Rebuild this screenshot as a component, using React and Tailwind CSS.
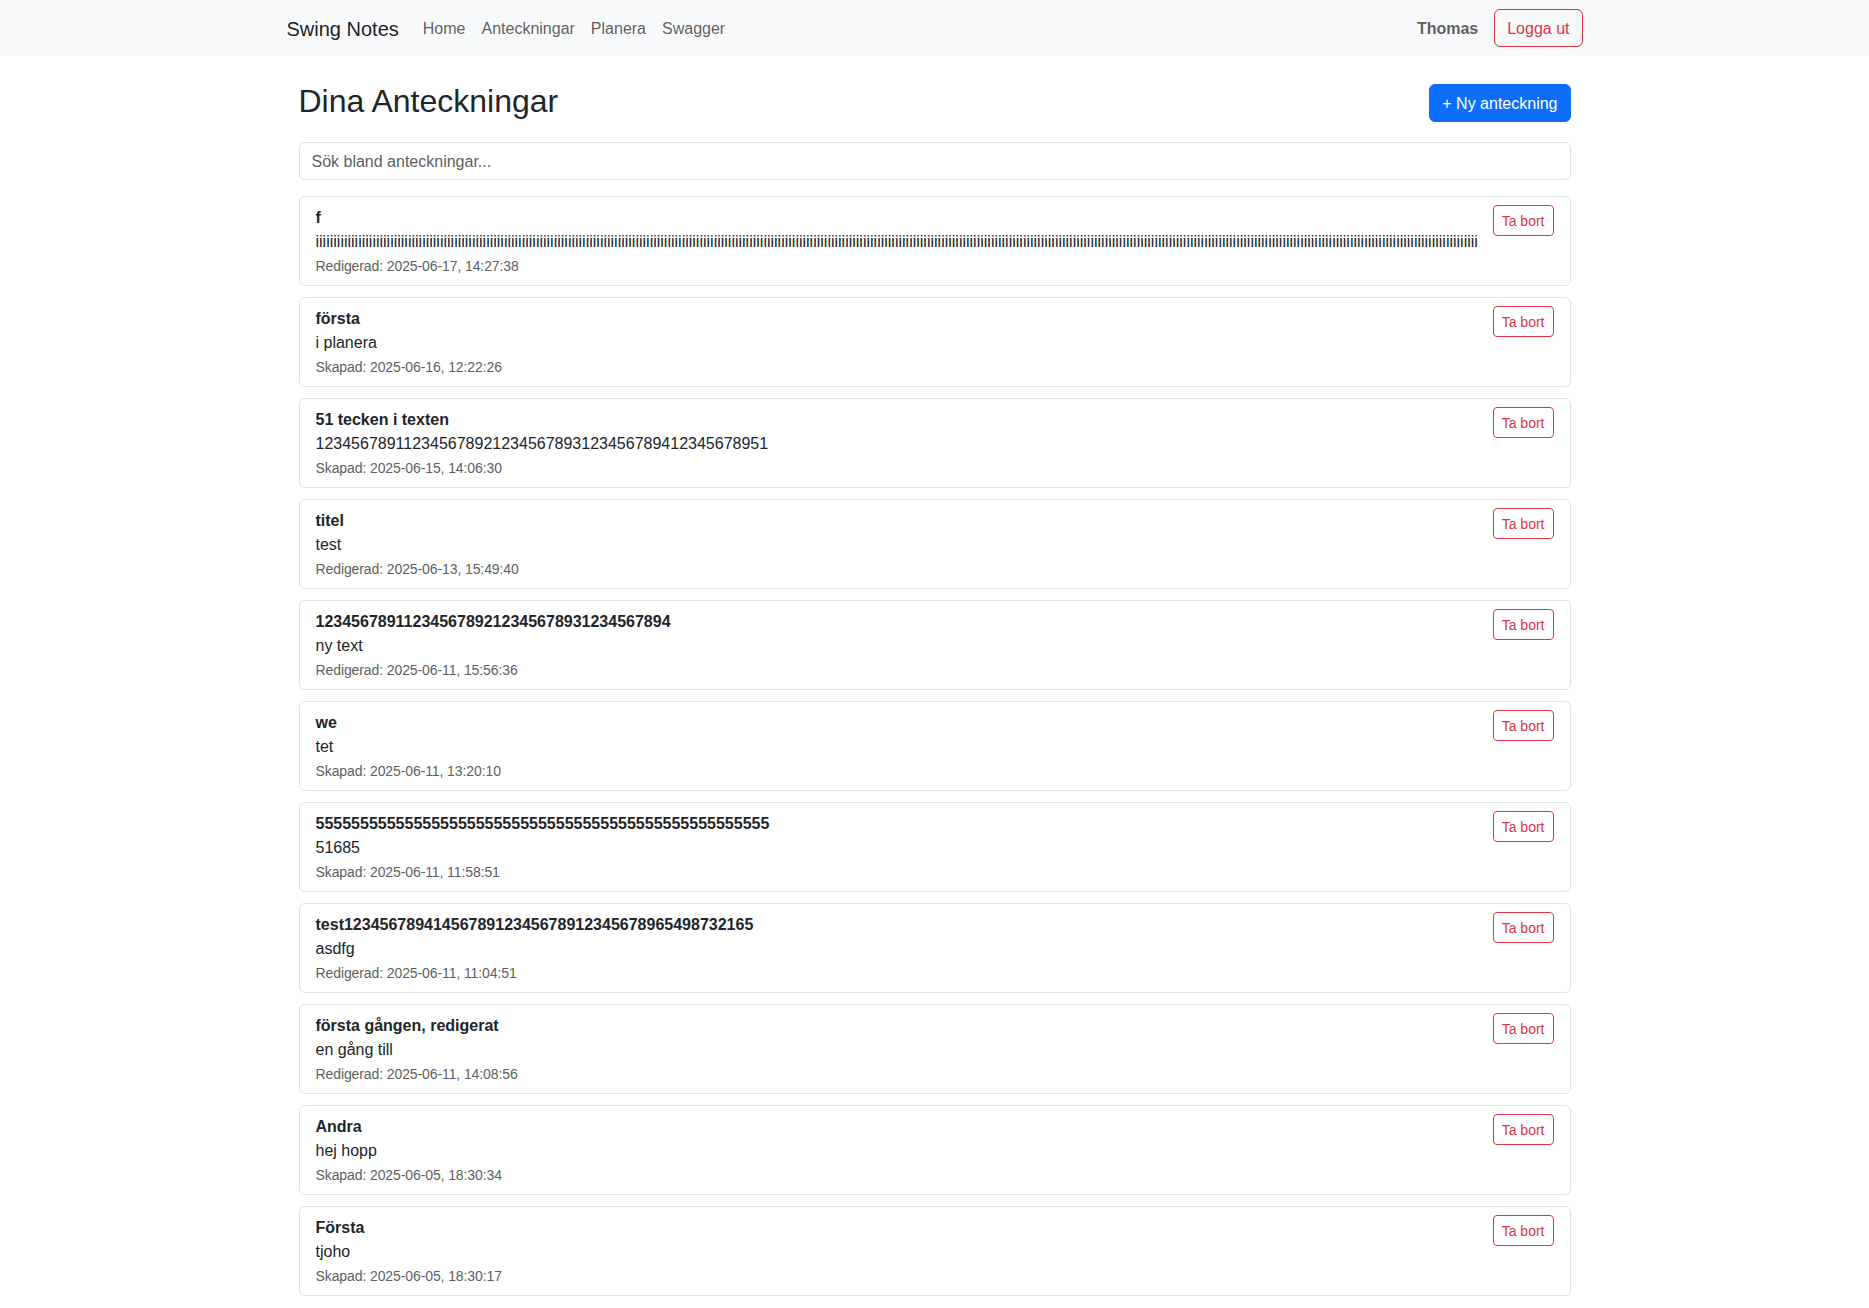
import React, { useState } from 'react';

const notes = [
  { title: 'f', body: 'i'.repeat(327), meta: 'Redigerad: 2025-06-17, 14:27:38' },
  { title: 'första', body: 'i planera', meta: 'Skapad: 2025-06-16, 12:22:26' },
  { title: '51 tecken i texten', body: '123456789112345678921234567893123456789412345678951', meta: 'Skapad: 2025-06-15, 14:06:30' },
  { title: 'titel', body: 'test', meta: 'Redigerad: 2025-06-13, 15:49:40' },
  { title: '1234567891123456789212345678931234567894', body: 'ny text', meta: 'Redigerad: 2025-06-11, 15:56:36' },
  { title: 'we', body: 'tet', meta: 'Skapad: 2025-06-11, 13:20:10' },
  { title: '5'.repeat(51), body: '51685', meta: 'Skapad: 2025-06-11, 11:58:51' },
  { title: 'test1234567894145678912345678912345678965498732165', body: 'asdfg', meta: 'Redigerad: 2025-06-11, 11:04:51' },
  { title: 'första gången, redigerat', body: 'en gång till', meta: 'Redigerad: 2025-06-11, 14:08:56' },
  { title: 'Andra', body: 'hej hopp', meta: 'Skapad: 2025-06-05, 18:30:34' },
  { title: 'Första', body: 'tjoho', meta: 'Skapad: 2025-06-05, 18:30:17' },
];

const NoteCard = ({ note }) => (
  <div className="mb-[11px] flex items-start justify-between rounded-md border border-[#dee2e6] bg-white px-4 pt-[9px] pb-[7px]">
    <div className="min-w-0">
      <div className="font-bold leading-6">{note.title}</div>
      <div className="leading-6 whitespace-nowrap">{note.body}</div>
      <div className="leading-6">
        <small className="text-[14px] tracking-[-0.1px] text-[#5c5f62]">{note.meta}</small>
      </div>
    </div>
    <button className="-mt-px ml-2 shrink-0 rounded-[4px] border border-[#dc3545] bg-white px-2 pt-[5px] pb-[3px] text-[14px] leading-[21px] text-[#dc3545]">
      Ta bort
    </button>
  </div>
);

const App = () => {
  const [search, setSearch] = useState('');

  return (
    <div className="min-h-screen bg-white font-['Liberation_Sans',Arial,sans-serif] text-[16px] text-[#212529]">
      {/* Navbar */}
      <nav className="h-14 bg-[#f8f9fa]">
        <div className="mx-auto flex h-full max-w-[1320px] items-center px-3">
          <span className="mr-4 pt-[6px] pb-[4px] text-[20px] leading-[30px] text-[#000000e6]">Swing Notes</span>
          <div className="flex">
            {['Home', 'Anteckningar', 'Planera', 'Swagger'].map(link => (
              <a key={link} className="px-2 pt-[9px] pb-[7px] leading-6 text-[#000000a6]">{link}</a>
            ))}
          </div>
          <div className="ml-auto flex items-center">
            <span className="mr-4 pt-px font-bold text-[#000000a6]">Thomas</span>
            <button className="rounded-md border border-[#dc3545] px-3 pt-[7px] pb-[5px] leading-6 text-[#dc3545]">
              Logga ut
            </button>
          </div>
        </div>
      </nav>

      <div className="mx-auto mt-6 max-w-[1320px] px-6">
        {/* Header */}
        <div className="mb-4 flex items-center justify-between">
          <h2 className="mb-[6px] pt-[2px] text-[32px] leading-[38.4px] font-normal">Dina Anteckningar</h2>
          <button className="rounded-md border border-[#0d6efd] bg-[#0d6efd] px-3 pt-[7px] pb-[5px] leading-6 text-white">
            + Ny anteckning
          </button>
        </div>

        {/* Search */}
        <input
          type="text"
          value={search}
          onChange={e => setSearch(e.target.value)}
          placeholder="Sök bland anteckningar..."
          className="mb-4 block w-full rounded-md border border-[#dee2e6] px-3 pt-[7px] pb-[5px] leading-6 text-[#212529] outline-none placeholder:text-[#5c5f62]"
        />

        {/* Notes */}
        <div>
          {notes
            .filter(n => (n.title + n.body).toLowerCase().includes(search.toLowerCase()))
            .map((note, i) => (
              <NoteCard key={i} note={note} />
            ))}
        </div>
      </div>
    </div>
  );
};

export default App;
